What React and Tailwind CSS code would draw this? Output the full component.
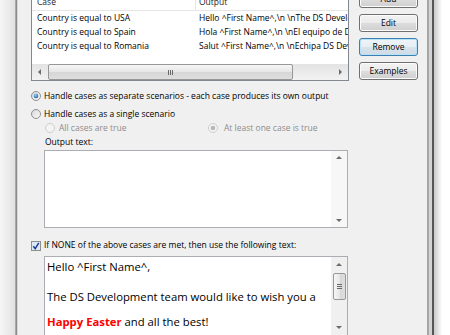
import React from 'react'

const Radio = ({ checked, disabled }) => (
  <svg width="10" height="10" viewBox="0 0 10 10" className="shrink-0">
    <defs>
      <linearGradient id="rf" x1="0" y1="0" x2="1" y2="1">
        <stop offset="0" stopColor="#d6d6d6" />
        <stop offset="1" stopColor="#fbfbfb" />
      </linearGradient>
      <radialGradient id="rd" cx="0.4" cy="0.35" r="0.7">
        <stop offset="0" stopColor="#8fd0ff" />
        <stop offset="1" stopColor="#185a9c" />
      </radialGradient>
    </defs>
    <circle cx="5" cy="5" r="4.5" fill={disabled ? '#f4f4f4' : 'url(#rf)'} stroke={disabled ? '#cdcdcd' : '#8e8f8f'} strokeWidth="1" />
    {checked && <circle cx="5" cy="5" r="2.3" fill={disabled ? '#b8b8b8' : 'url(#rd)'} />}
  </svg>
)

const Check = () => (
  <svg width="10" height="10" viewBox="0 0 10 10" className="shrink-0">
    <rect x="0.5" y="0.5" width="9" height="9" fill="#dbe9f7" stroke="#8e8f8f" />
    <path d="M2.3 5.2 L4.2 7.6 L7.8 1.8" fill="none" stroke="#1f3f8f" strokeWidth="1.5" />
  </svg>
)

const Btn = ({ children, focus }) => (
  <div
    className={
      focus
        ? 'h-[18px] rounded-[3px] border border-[#3c7fb1] shadow-[inset_0_0_0_1px_#b9e1f8] bg-[linear-gradient(#eef4f8,#e6eef4_50%,#d8e3ec_50%,#cfdbe5)] flex items-center justify-center text-[8.5px] text-black'
        : 'h-[18px] rounded-[3px] border border-[#707070] shadow-[inset_0_0_0_1px_#fcfcfc] bg-[linear-gradient(#f2f2f2,#ebebeb_50%,#dddddd_50%,#cfcfcf)] flex items-center justify-center text-[8.5px] text-black'
    }
  >
    {children}
  </div>
)

const Arrow = ({ dir }) => {
  const d = {
    l: 'M5 1 L2 4 L5 7 Z',
    r: 'M3 1 L6 4 L3 7 Z',
    u: 'M1 5 L4 2 L7 5 Z',
    d: 'M1 3 L4 6 L7 3 Z',
  }[dir]
  return (
    <svg width="8" height="8" viewBox="0 0 8 8">
      <path d={d} fill="#6b6b6b" />
    </svg>
  )
}

const rows = [
  ['Country is equal to USA', 'Hello ^First Name^,\\n \\nThe DS Development team'],
  ['Country is equal to Spain', 'Hola ^First Name^,\\n \\nEl equipo de DS Development'],
  ['Country is equal to Romania', 'Salut ^First Name^,\\n \\nEchipa DS Development'],
]

export default function App() {
  return (
    <div className="w-[450px] h-[335px] overflow-hidden flex bg-white font-['Open_Sans','Noto_Sans',sans-serif] text-[8.5px] leading-none text-black">
      {/* left frame */}
      <div className="w-[15px] shrink-0 bg-[linear-gradient(90deg,#f6f6f6,#e2e2e2)]" />
      <div className="w-[1px] shrink-0 bg-[#a9a9a9]" />
      <div className="w-[1px] shrink-0 bg-[#8a8a8a]" />
      <div className="w-[1px] shrink-0 bg-[#d9d9d9]" />

      {/* dialog body */}
      <div className="w-[409px] shrink-0 bg-[#f0f0f0] pl-[13px] flex flex-col">
        {/* list + buttons */}
        <div className="flex items-start mt-[-6px]">
          <div className="w-[318px] h-[87px] border border-[#828790] bg-white flex flex-col overflow-hidden">
            <div className="h-[16px] shrink-0 flex border-b border-[#e5e5e5] text-[#1e1e1e]">
              <div className="w-[164px] pl-[5px] flex items-center border-r border-[#e5e5e5]">Case</div>
              <div className="flex-1 pl-[3px] flex items-center">Output</div>
            </div>
            {rows.map(([c, o]) => (
              <div key={c} className="h-[14px] shrink-0 flex items-center whitespace-nowrap overflow-hidden">
                <div className="w-[164px] pl-[5px] shrink-0">{c}</div>
                <div className="pl-[3px]">{o}</div>
              </div>
            ))}
            <div className="h-[11px] shrink-0" />
            {/* horizontal scrollbar */}
            <div className="h-[16px] shrink-0 flex bg-[linear-gradient(#e3e3e3,#f2f2f2)]">
              <div className="w-[16px] flex items-center justify-center"><Arrow dir="l" /></div>
              <div className="w-[245px] rounded-[2px] border border-[#979797] bg-[linear-gradient(#f6f6f6,#e6e6e6_50%,#d6d6d6_50%,#dedede)] flex items-center justify-center">
                <div className="flex gap-[1px]">
                  <div className="w-[1px] h-[5px] bg-[#6a6a6a]" />
                  <div className="w-[1px] h-[5px] bg-[#6a6a6a]" />
                  <div className="w-[1px] h-[5px] bg-[#6a6a6a]" />
                </div>
              </div>
              <div className="flex-1" />
              <div className="w-[16px] flex items-center justify-center"><Arrow dir="r" /></div>
            </div>
          </div>
          <div className="w-[59px] ml-[10px] mt-[-4px] flex flex-col gap-[6px]">
            <Btn>Add</Btn>
            <Btn>Edit</Btn>
            <Btn focus>Remove</Btn>
            <Btn>Examples</Btn>
          </div>
        </div>

        {/* options */}
        <div className="mt-[10px] h-[10px] flex items-center">
          <Radio checked />
          <span className="ml-[3px] whitespace-nowrap">Handle cases as separate scenarios - each case produces its own output</span>
        </div>
        <div className="mt-[8px] h-[10px] flex items-center">
          <Radio />
          <span className="ml-[3px]">Handle cases as a single scenario</span>
        </div>
        <div className="mt-[4px] h-[10px] flex items-center text-[#8d8d8d]">
          <div className="w-[164px] pl-[14px] flex items-center">
            <Radio disabled />
            <span className="ml-[4px]">All cases are true</span>
          </div>
          <div className="flex items-center pl-[13px]">
            <Radio checked disabled />
            <span className="ml-[6px]">At least one case is true</span>
          </div>
        </div>
        <div className="mt-[5px] h-[10px] pl-[14px] flex items-center">Output text:</div>
        <div className="mt-[3px] ml-[13px] w-[304px] h-[78px] shrink-0 border border-[#abadb3] bg-white flex justify-end">
          <div className="w-[16px] flex flex-col justify-between items-center py-[3px] bg-[#f7f7f7]">
            <Arrow dir="u" />
            <Arrow dir="d" />
          </div>
        </div>

        <div className="mt-[13px] h-[10px] flex items-center">
          <Check />
          <span className="ml-[3px]">If NONE of the above cases are met, then use the following text:</span>
        </div>
        <div className="mt-[5px] ml-[13px] w-[304px] h-[90px] shrink-0 border border-[#abadb3] bg-white flex">
          <div className="flex-1 pl-[2px] pt-[2px] text-[11.3px] leading-[15px] whitespace-nowrap overflow-hidden">
            <p>Hello ^First Name^,</p>
            <p>&nbsp;</p>
            <p>The DS Development team would like to wish you a</p>
            <p className="mt-[10px]"><span className="text-[#ff0000] font-bold">Happy Easter</span> and all the best!</p>
          </div>
          <div className="w-[16px] shrink-0 flex flex-col items-center bg-[#f0f0f0]">
            <div className="h-[16px] flex items-center justify-center"><Arrow dir="u" /></div>
            <div className="w-[13px] h-[27px] rounded-[2px] border border-[#979797] bg-[linear-gradient(90deg,#f6f6f6,#e6e6e6_50%,#d6d6d6_50%,#dedede)] flex flex-col items-center justify-center gap-[1px]">
              <div className="w-[5px] h-[1px] bg-[#6a6a6a]" />
              <div className="w-[5px] h-[1px] bg-[#6a6a6a]" />
              <div className="w-[5px] h-[1px] bg-[#6a6a6a]" />
            </div>
            <div className="flex-1" />
            <div className="h-[16px] flex items-center justify-center mb-[10px]"><Arrow dir="d" /></div>
          </div>
        </div>
      </div>

      {/* right frame */}
      <div className="w-[2px] shrink-0 bg-[#a6a6a6]" />
      <div className="w-[3px] shrink-0 bg-[#d2d2d2]" />
      <div className="w-[2px] shrink-0 bg-[#555555]" />
      <div className="flex-1 bg-[linear-gradient(90deg,#c8c8c8,#ffffff_50%)]" />
    </div>
  )
}
